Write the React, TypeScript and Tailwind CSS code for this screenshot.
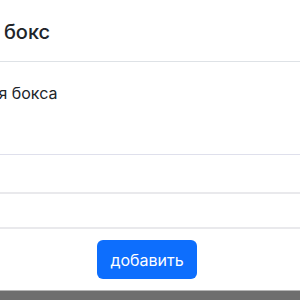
import React from "react";

export default function App() {
  return (
    <div
      className="w-[300px] h-[300px] overflow-hidden bg-white flex flex-col text-[#212529]"
      style={{ fontFamily: "Inter, 'Liberation Sans', sans-serif" }}
    >
      <div className="h-[62px] shrink-0 flex items-center border-b border-[#dee2e6] overflow-hidden">
        <h5 className="text-[20px] leading-[30px] font-medium whitespace-nowrap ml-[-67px] pt-[2px]">
          Новый бокс
        </h5>
      </div>
      <div className="h-[92px] shrink-0 overflow-hidden pt-[19px]">
        <p className="text-[16px] leading-[24px] whitespace-nowrap ml-[-26px]">Имя бокса</p>
      </div>
      <div className="h-[38px] shrink-0 border-t border-[#dfe0ec]" />
      <div className="h-[35px] shrink-0 border-t-2 border-[#e9e9ec]" />
      <div className="h-[63px] shrink-0 border-t-2 border-[#e9e9ec] flex items-start justify-center pt-[11px]">
        <button className="w-[100px] h-[39px] rounded-[6px] bg-[#0d6efd] text-white text-[16px] leading-[24px] ml-[-6px]">
          добавить
        </button>
      </div>
      <div className="h-[1px] shrink-0 bg-[#b5b5b5]" />
      <div className="flex-1 bg-[#6e6e6e]" />
    </div>
  );
}
